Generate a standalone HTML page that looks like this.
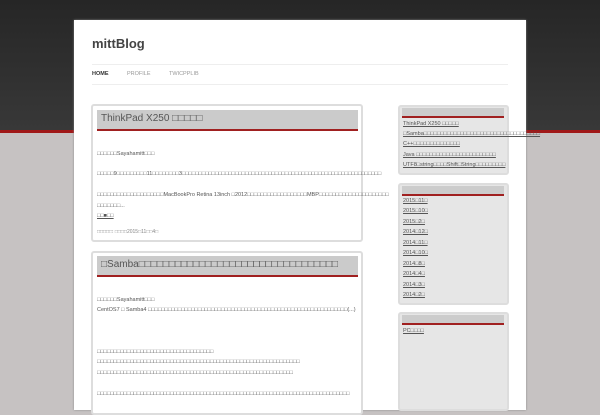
<!DOCTYPE html><html style="height:400px;background:#c6c2c2"><head><meta charset="utf-8"><style>
html,body{height:400px}
body{margin:0;width:600px;overflow:hidden;font-family:"Liberation Sans","DejaVu Sans",sans-serif;background:linear-gradient(#262626 0,#383838 130px,#a01818 130px,#a01818 133px,#c6c2c2 133px,#c6c2c2 400px) no-repeat;background-size:600px 400px;position:relative}
.page{position:absolute;left:74px;top:20px;width:452px;height:390px;background:#fff;box-shadow:0 0 2px #888}
.abs{position:absolute}
.box{position:absolute;border:2px solid #ddd;border-radius:3px;background:#fff}
.hd{position:absolute;background:#cbcbcb;border-bottom:2px solid #a02020}
.t{position:absolute;font-size:5.5px;color:#555;white-space:nowrap}
.u{text-decoration:underline}
.w{position:absolute;border:2px solid #ddd;border-radius:3px;background:#e6e6e6}
</style></head><body>
<div class="page">
<div class="abs" style="left:18px;top:16px;font-size:13px;font-weight:bold;color:#444">mittBlog</div>
<div class="abs" style="left:18px;top:44px;width:416px;border-top:1px solid #eee;height:19px;border-bottom:1px solid #eee"></div>
<div class="t" style="left:18px;top:51px;color:#333;font-weight:bold">HOME</div>
<div class="t" style="left:53px;top:51px;color:#999">PROFILE</div>
<div class="t" style="left:95px;top:51px;color:#999">TWICPPLIB</div>
</div>
<div class="box" style="left:91px;top:104px;width:268px;height:134px"></div>
<div class="hd" style="left:97px;top:110px;width:261px;height:19px"></div>
<div class="abs" style="left:101px;top:113px;font-size:10px;color:#555">ThinkPad X250 □□□□□</div>
<div class="t" style="left:97px;top:151px">□□□□□□Sayahamitt□□□</div>
<div class="t" style="left:97px;top:171px">□□□□□9□□□□□□□□□11□□□□□□□□3□□□□□□□□□□□□□□□□□□□□□□□□□□□□□□□□□□□□□□□□□□□□□□□□□□□□□□□□□□□□</div>
<div class="t" style="left:97px;top:192px">□□□□□□□□□□□□□□□□□□□□MacBookPro Retina 13inch □2012□□□□□□□□□□□□□□□□□□MBP□□□□□□□□□□□□□□□□□□□□□</div>
<div class="t" style="left:97px;top:203px">□□□□□□□...</div>
<div class="t u" style="left:97px;top:213px">□□■□□</div>
<div class="t" style="left:97px;top:229px;color:#888;font-size:5px">□□□□□: □□□□2015□11□□4□</div>
<div class="box" style="left:91px;top:251px;width:268px;height:160px"></div>
<div class="hd" style="left:97px;top:256px;width:261px;height:19px"></div>
<div class="abs" style="left:101px;top:259px;font-size:10px;color:#555">□Samba□□□□□□□□□□□□□□□□□□□□□□□□□□□□□□□□□</div>
<div class="t" style="left:97px;top:297px">□□□□□□Sayahamitt□□□</div>
<div class="t" style="left:97px;top:307px">CentOS7 □ Samba4 □□□□□□□□□□□□□□□□□□□□□□□□□□□□□□□□□□□□□□□□□□□□□□□□□□□□□□□□□□□□(...)</div>
<div class="t" style="left:97px;top:349px">□□□□□□□□□□□□□□□□□□□□□□□□□□□□□□□□□□□</div>
<div class="t" style="left:97px;top:359px">□□□□□□□□□□□□□□□□□□□□□□□□□□□□□□□□□□□□□□□□□□□□□□□□□□□□□□□□□□□□□</div>
<div class="t" style="left:97px;top:370px">□□□□□□□□□□□□□□□□□□□□□□□□□□□□□□□□□□□□□□□□□□□□□□□□□□□□□□□□□□□</div>
<div class="t" style="left:97px;top:391px">□□□□□□□□□□□□□□□□□□□□□□□□□□□□□□□□□□□□□□□□□□□□□□□□□□□□□□□□□□□□□□□□□□□□□□□□□□□□</div>
<div class="w" style="left:398px;top:105px;width:107px;height:66px"></div>
<div class="hd" style="left:402px;top:108px;width:102px;height:8px;background:#ccc"></div>
<div class="t u" style="left:403px;top:121px">ThinkPad X250 □□□□□</div>
<div class="t u" style="left:403px;top:131px">□Samba□□□□□□□□□□□□□□□□□□□□□□□□□□□□□□□□□□□</div>
<div class="t u" style="left:403px;top:141px">C++□□□□□□□□□□□□□□</div>
<div class="t u" style="left:403px;top:152px">Java □□□□□□□□□□□□□□□□□□□□□□□□</div>
<div class="t u" style="left:403px;top:162px">UTF8□string□□□□Shift□String□□□□□□□□□</div>
<div class="w" style="left:398px;top:183px;width:107px;height:118px"></div>
<div class="hd" style="left:402px;top:186px;width:102px;height:8px;background:#ccc"></div>
<div class="t u" style="left:403px;top:198px">2015□11□</div>
<div class="t u" style="left:403px;top:208px">2015□10□</div>
<div class="t u" style="left:403px;top:219px">2015□2□</div>
<div class="t u" style="left:403px;top:229px">2014□12□</div>
<div class="t u" style="left:403px;top:240px">2014□11□</div>
<div class="t u" style="left:403px;top:250px">2014□10□</div>
<div class="t u" style="left:403px;top:261px">2014□8□</div>
<div class="t u" style="left:403px;top:271px">2014□4□</div>
<div class="t u" style="left:403px;top:282px">2014□3□</div>
<div class="t u" style="left:403px;top:292px">2014□2□</div>
<div class="w" style="left:398px;top:312px;width:107px;height:95px"></div>
<div class="hd" style="left:402px;top:315px;width:102px;height:8px;background:#ccc"></div>
<div class="t u" style="left:403px;top:328px">PC□□□□</div>
</body></html>
